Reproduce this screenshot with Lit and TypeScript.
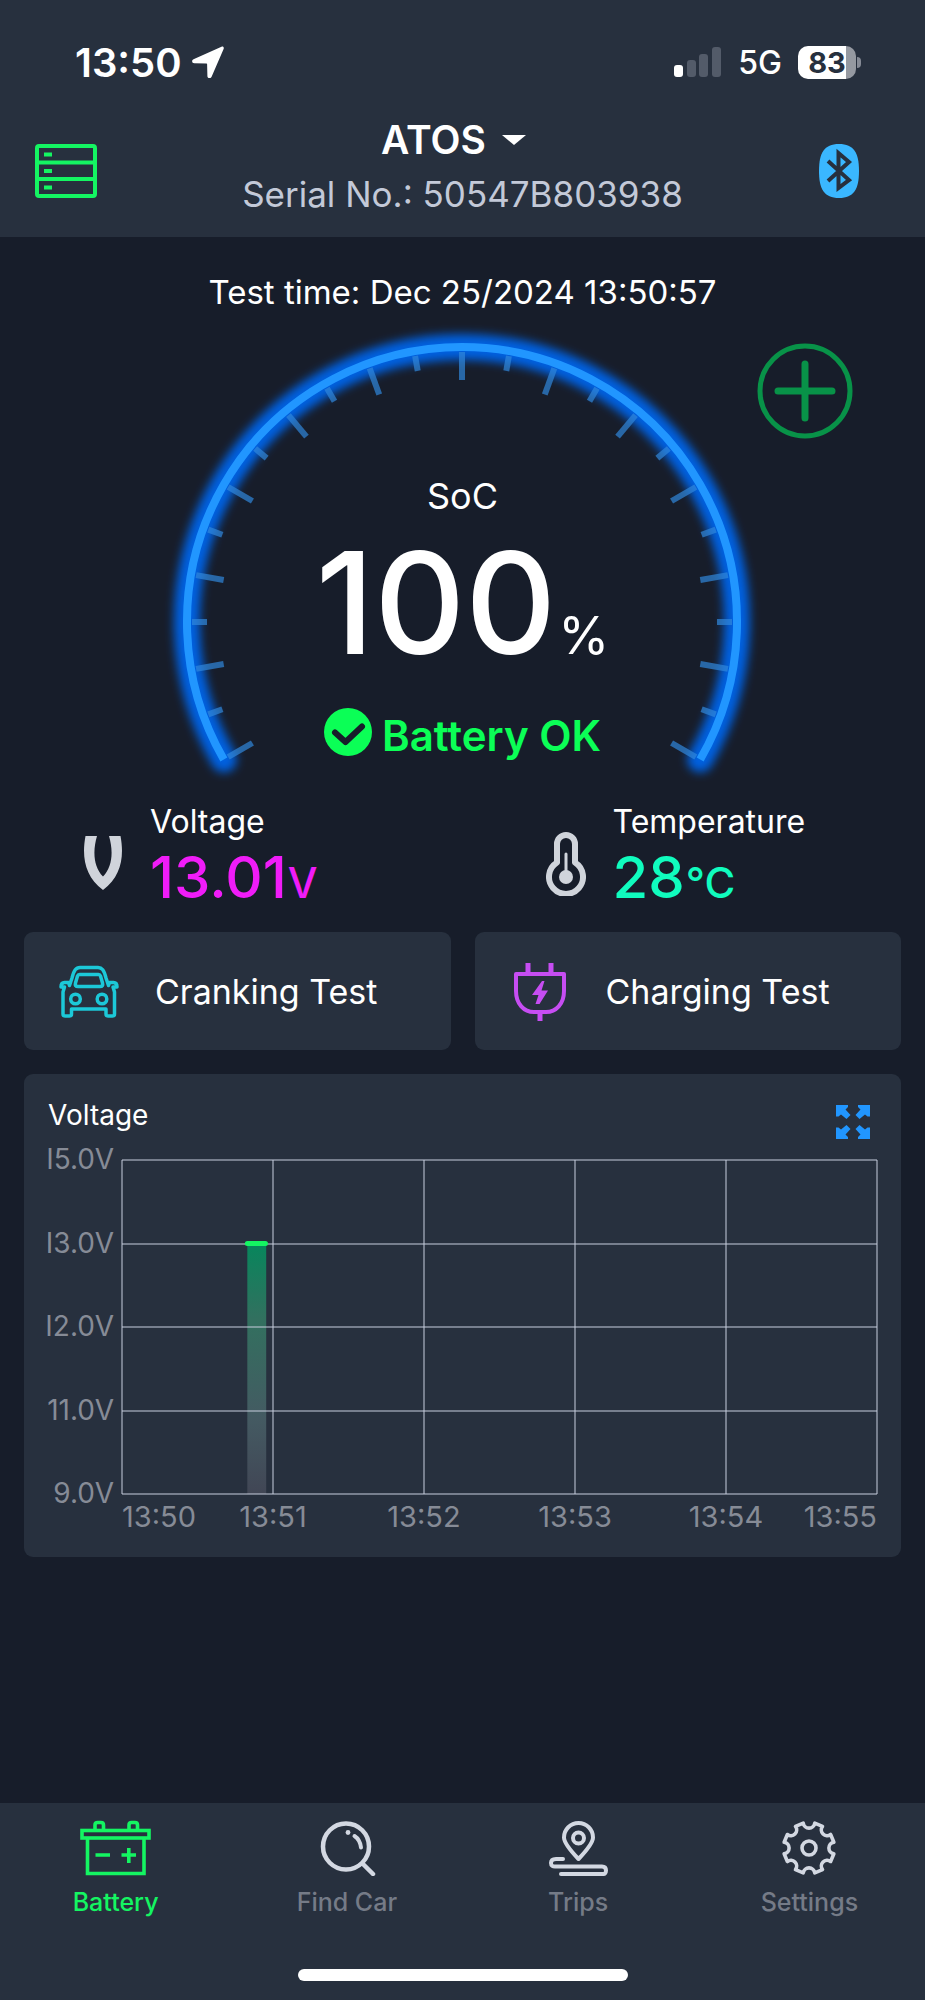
import { LitElement, html, svg, css } from "lit";
import { customElement, property, state } from "lit/decorators.js";
import { classMap } from "lit/directives/class-map.js";

const polar = (cx: number, cy: number, r: number, deg: number) => {
  const a = (deg * Math.PI) / 180;
  return [cx + r * Math.cos(a), cy + r * Math.sin(a)].map((n) => n.toFixed(2)).join(" ");
};

/** Outline of the settings gear: eight teeth separated by round notches. */
const gearPath = () => {
  let d = "";
  for (let k = 0; k < 8; k++) {
    const a = k * 45;
    d += `${k ? "L" : "M"}${polar(30, 28, 25.5, a - 13)}A5.8 5.8 0 0 0 ${polar(30, 28, 25.5, a + 13)}`;
  }
  return d + "Z";
};

const icons = {
  list: svg`<svg viewBox="0 0 62 54" width="62" height="54" fill="none" stroke="#14f562" stroke-width="4">
    <rect x="2" y="2" width="58" height="50" rx="2"/><path d="M2 18.5H60M2 35H60"/>
    <path d="M9 10.500H17M9 27H17M9 43.500H17"/></svg>`,
  bluetooth: svg`<svg viewBox="0 0 42 54" width="42" height="54">
    <path fill="#3ab7ff" d="M21 0C36 0 41 9 41 27S36 54 21 54 1 45 1 27 6 0 21 0Z"/>
    <path fill="none" stroke="#27303e" stroke-width="4" d="M10 17 31 36 20.500 44V9L31 18 10 37"/></svg>`,
  arrow: svg`<svg viewBox="0 0 32 32" width="32" height="32"><path fill="#fff" d="M29.500 .8 1.500 13.300c-2.200 1-1.600 4 .8 4l12.200.3c.4 0 .6.200.6.600l.3 11.800c0 2.500 3.200 3 4.200.8L31.600 3c.7-1.600-.5-2.900-2.100-2.200Z"/></svg>`,
  signal: svg`<svg viewBox="0 0 48 30" width="48" height="30" fill="#535b69">
    <rect x="0" y="18" width="9" height="12" rx="3" fill="#fff"/><rect x="13" y="13" width="9" height="17" rx="3"/>
    <rect x="25" y="7" width="9" height="23" rx="3"/><rect x="38" y="0" width="9" height="30" rx="3"/></svg>`,
  volt: svg`<svg viewBox="0 0 40 64" width="40" height="64"><path fill="#d0d4db" d="M2.500 4H14C9.500 19 10.500 35 20 44.500 29.500 35 30.500 19 26 4H37.500C41.500 25 38 45 20 58 2 45-1.500 25 2.500 4Z"/></svg>`,
  thermo: svg`<svg viewBox="0 0 40 64" width="40" height="64" fill="none" stroke="#d0d4db">
    <path stroke-width="6" stroke-linejoin="round" d="M11 12a9 9 0 0 1 18 0v18.500a17 17 0 1 1-18 0Z"/>
    <path stroke-width="3" stroke-linecap="round" d="M20 22V44"/><circle cx="20" cy="45" r="7" fill="#d0d4db" stroke="none"/></svg>`,
  car: svg`<svg viewBox="0 0 60 60" width="60" height="60" fill="none" stroke="#1cc8d8" stroke-width="3.500" stroke-linejoin="round">
    <path d="M10.500 24.500 13 17C15 9 17 6.500 21 6.500H39C43 6.500 45 9 47 17L49.500 24.500 50.500 21.500H54.500Q58 21.500 58 26H54L55.500 31V53Q55.500 55 53.500 55H49Q47 55 47 53V48H12.500V53Q12.500 55 10.500 55H6Q4 55 4 53V31L5.500 26H2Q2 21.500 5.500 21.500H9.500Z"/>
    <path d="M20.500 13.500H39.500Q41 13.500 41.500 15L43.500 22Q44.500 25.500 41 25.500H19Q15.500 25.500 16.500 22L18.500 15Q19 13.500 20.500 13.500Z"/>
    <circle cx="16.500" cy="38" r="4.800"/><circle cx="43" cy="38" r="4.800"/></svg>`,
  plug: svg`<svg viewBox="0 0 60 60" width="60" height="60" fill="none" stroke="#c64df2" stroke-width="4">
    <path stroke-linejoin="round" d="M6 13H54V30C54 43 46 51 36 51H24C14 51 6 43 6 30Z"/><path d="M18 2V13M41 2V13M30 51V60" stroke-width="5"/>
    <path fill="#c64df2" stroke="none" d="M32 20 22 34H28.500L25.500 43H29.500L38 29.500H31.500L34.500 20Z"/></svg>`,
  expand: svg`<svg viewBox="0 0 34 34" width="34" height="34" fill="#2196ff">
    <path d="M0 0H12V2L9.500 4.500 14.500 10 10.500 14 5 9.500 2.500 11.500H0ZM34 0H22V2L24.500 4.500 19.500 10 23.500 14 29 9.500 31.500 11.500H34ZM0 34H12V32L9.500 29.500 14.500 24 10.500 20 5 24.500 2.500 22.500H0ZM34 34H22V32L24.500 29.500 19.500 24 23.500 20 29 24.500 31.500 22.500H34Z"/></svg>`,
  battery: svg`<svg viewBox="0 0 72 56" width="72" height="56" fill="none" stroke="#14f562" stroke-width="3.600">
    <rect x="2" y="10.500" width="67" height="7.500"/><path d="M7.500 18V53.500H64V18M15 10V5Q15 2.500 17.500 2.500H21Q23.500 2.500 23.500 5V10M49 10V5Q49 2.500 51.500 2.500H55Q57.500 2.500 57.500 5V10M15.500 35H30M41.500 35H56M48.800 28V43"/></svg>`,
  search: svg`<svg viewBox="0 0 60 56" width="60" height="56" fill="none" stroke="#d3d8e2" stroke-width="4.500" stroke-linecap="round">
    <circle cx="29" cy="26.500" r="23"/><path d="M46 44 56 54"/><path d="M37.500 16Q43 19.500 44 27.500" stroke-width="4"/><circle cx="31" cy="12.500" r="2.400" fill="#d3d8e2" stroke="none"/></svg>`,
  trips: svg`<svg viewBox="0 0 60 56" width="60" height="56" fill="none" stroke="#d3d8e2" stroke-width="4" stroke-linecap="round" stroke-linejoin="round">
    <path d="M30.500 39C20 28 16 22 16 17.500a14.500 14.500 0 0 1 29 0C45 22 41 28 30.500 39Z"/><circle cx="30.500" cy="18" r="5.500"/>
    <path d="M15 39H8Q3 39 3 43T8 46.500H54Q58 46.500 58 50.500T54 54H13"/></svg>`,
  gear: svg`<svg viewBox="0 0 60 56" width="60" height="56" fill="none" stroke="#d3d8e2" stroke-width="3.600" stroke-linejoin="round">
    <path d=${gearPath()}/><circle cx="30" cy="28" r="7"/></svg>`,
};

@customElement("soc-gauge")
class SocGauge extends LitElement {
  @property({ type: Number }) value = 100;

  static styles = css`
    :host { display: grid; justify-items: center; }
    .dial, .reading { grid-area: 1 / 1; }
    .dial { display: block; width: 600px; max-width: 100%; }
    .reading { display: flex; flex-direction: column; align-items: center; padding-top: 152px; }
    .label { font-size: 36px; line-height: 44px; }
    .amount { display: flex; align-items: baseline; gap: 2px; margin-top: 15px; line-height: 140px; }
    .number { font-size: 141px; font-weight: 500; }
    .percent { font-size: 52px; line-height: 60px; font-weight: 400; }
    .status { display: flex; align-items: center; gap: 10px; margin-top: 35px; font-size: 42px; line-height: 48px; font-weight: 600; color: #0bff56; }
    .check { display: block; }
  `;

  render() {
    const arc = `M${polar(300, 300, 275, 150)}A275 275 0 1 1 ${polar(300, 300, 275, 30)}`;
    const ticks = Array.from({ length: 25 }, (_, i) => {
      const deg = 150 + i * 10;
      return svg`<path d=${`M${polar(300, 300, 270, deg)}L${polar(300, 300, i % 2 ? 255 : 242, deg)}`}/>`;
    });
    return html`
      <svg class="dial" viewBox="1 0 600 460" aria-hidden="true">
        <defs><filter id="glow" filterUnits="userSpaceOnUse" x="-20" y="-20" width="640" height="500"><feGaussianBlur stdDeviation="5"/></filter></defs>
        <path d=${arc} fill="none" stroke="#0061e0" stroke-width="26" stroke-linecap="round" filter="url(#glow)"/>
        <g stroke="#3088dc" stroke-opacity=".7" stroke-width="6">${ticks}</g>
        <path d=${arc} fill="none" stroke="#2196ff" stroke-width="8"/>
      </svg>
      <div class="reading">
        <span class="label">SoC</span>
        <div class="amount"><span class="number">${this.value}</span><span class="percent">%</span></div>
        <div class="status">
          <svg class="check" viewBox="0 0 48 56" width="48" height="56"><circle cx="24" cy="24" r="24" fill="#0bff56"/><path d="M11 24.500 21.500 34 38 18.500" fill="none" stroke="#171d2a" stroke-width="6" stroke-linecap="round" stroke-linejoin="round"/></svg>
          <span>Battery OK</span>
        </div>
      </div>`;
  }
}

@customElement("voltage-chart")
class VoltageChart extends LitElement {
  @property({ attribute: false }) levels = ["I5.0V", "I3.0V", "I2.0V", "11.0V", "9.0V"];
  @property({ attribute: false }) times = ["13:50", "13:51", "13:52", "13:53", "13:54", "13:55"];

  static styles = css`
    :host { display: block; background: #27303e; border-radius: 9px; padding: 23px 24px 24px 0; }
    .head { display: flex; justify-content: space-between; align-items: flex-start; height: 63px; padding: 0 7px 0 24px; }
    .title { margin: 0; font-size: 28px; line-height: 36px; font-weight: 400; }
    .expand { border: 0; background: none; padding: 8px 0 0; cursor: pointer; }
    .expand svg { display: block; }
    .body { display: grid; grid-template-columns: 98px 1fr; color: #868b96; font-size: 29px; line-height: 32px; }
    .levels { display: flex; flex-direction: column; justify-content: space-between; align-items: flex-end; margin: -17px 0 -15px; padding-right: 8px; font-size: 28px; }
    .plot { display: block; width: 100%; height: 334px; overflow: visible; }
    .times { grid-column: 2; display: flex; padding-top: 7px; white-space: nowrap; }
    .time { flex: 2; text-align: center; }
    .time:first-child { flex: 1; text-align: left; }
    .time:last-child { flex: 1; text-align: right; }
  `;

  render() {
    const rows = [0, 25, 50, 75, 100];
    const cols = [0, 20, 40, 60, 80, 100];
    return html`
      <div class="head">
        <h2 class="title">Voltage</h2>
        <button class="expand" aria-label="Expand chart">${icons.expand}</button>
      </div>
      <div class="body">
        <div class="levels">${this.levels.map((l) => html`<span>${l}</span>`)}</div>
        <svg class="plot" role="img" aria-label="Voltage over time">
          <defs><linearGradient id="fade" x1="0" y1="0" x2="0" y2="1">
            <stop offset="0" stop-color="#07865c"/><stop offset=".3" stop-color="#32705f"/>
            <stop offset=".7" stop-color="#445a62"/><stop offset="1" stop-color="#414655"/></linearGradient></defs>
          <rect x="16.600%" y="25%" width="2.500%" height="75%" fill="url(#fade)"/>
          <g stroke="#c8cede" stroke-opacity=".5" stroke-width="2" shape-rendering="crispEdges">
            ${rows.map((y) => svg`<line x1="0" x2="100%" y1=${y + "%"} y2=${y + "%"}/>`)}
            ${cols.map((x) => svg`<line y1="0" y2="100%" x1=${x + "%"} x2=${x + "%"}/>`)}
          </g>
          <line x1="16.600%" x2="19%" y1="25%" y2="25%" stroke="#14f562" stroke-width="5" stroke-linecap="round"/>
        </svg>
        <div class="times">${this.times.map((t) => html`<span class="time">${t}</span>`)}</div>
      </div>`;
  }
}

@customElement("app-root")
class AppRoot extends LitElement {
  @state() private tab = "Battery";

  static styles = css`
    :host { display: flex; flex-direction: column; min-height: 100vh; background: #171d2a; color: #fff; font-family: Inter, "Liberation Sans", sans-serif; }
    button { font: inherit; color: inherit; border: 0; background: none; padding: 0; cursor: pointer; }
    svg { display: block; }
    .top { background: #27303e; padding: 38px 0 21px; }
    .status { display: flex; justify-content: space-between; align-items: center; height: 48px; padding: 0 64px 0 75px; }
    .clock { display: flex; align-items: center; gap: 10px; font-size: 40px; font-weight: 600; }
    .radio { display: flex; align-items: center; gap: 16px; font-size: 32px; font-weight: 500; }
    .cell { display: flex; align-items: center; gap: 1px; }
    .charge { display: flex; align-items: center; justify-content: center; width: 58px; height: 33px; border-radius: 10px; background: linear-gradient(90deg, #fff 83%, #9599a1 83%); color: #27303e; font-size: 29px; line-height: 33px; font-weight: 700; }
    .tip { width: 4px; height: 11px; border-radius: 0 6px 6px 0; background: #868b96; }
    .bar { display: grid; grid-template-columns: 1fr auto 1fr; align-items: center; margin-top: 30px; padding: 0 65px 0 35px; }
    .bar > button { padding-top: 9px; }
    .bar > :last-child { justify-self: end; }
    .bar > :first-child { justify-self: start; }
    .title { display: flex; flex-direction: column; align-items: center; gap: 8px; margin-left: 30px; }
    .device { display: flex; align-items: center; gap: 16px; padding-right: 18px; font-size: 39px; line-height: 48px; font-weight: 600; }
    .caret { border: 12px solid transparent; border-top: 10px solid #fff; border-bottom: 0; }
    .serial { font-size: 35px; line-height: 44px; color: #c3c9d8; }
    .body { display: flex; flex-direction: column; padding: 35px 24px 24px; }
    .time { text-align: center; font-size: 33px; line-height: 40px; }
    .hero { display: grid; margin-top: 10px; }
    .hero > * { grid-area: 1 / 1; }
    .add { justify-self: end; align-self: start; margin: 21px 48px 0 0; }
    .metrics { display: grid; grid-template-columns: 1fr 1fr; margin: 20px -24px 0; }
    .metric { display: flex; align-items: flex-end; gap: 27px; padding-left: 83px; }
    .metric svg { margin-bottom: 11px; }
    .name { font-size: 32px; line-height: 40px; }
    .value { display: flex; align-items: baseline; gap: 1px; margin-top: 5px; line-height: 60px; font-size: 58px; font-weight: 500; }
    .unit { font-size: 42px; line-height: 44px; }
    .volts { color: #f01cf8; }
    .degrees { color: #10fcbe; }
    .tests { display: grid; grid-template-columns: 1fr 1fr; gap: 24px; margin: 25px 0 24px; }
    .test { display: flex; align-items: center; gap: 36px; height: 118px; padding: 0 35px; background: #27303e; border-radius: 9px; font-size: 34px; }
    .nav { margin-top: auto; background: #27303e; padding: 17px 0 19px; }
    .tabs { display: grid; grid-template-columns: repeat(4, 1fr); }
    .tab { display: flex; flex-direction: column; align-items: center; gap: 11px; font-size: 25px; line-height: 30px; font-weight: 500; color: #757b87; }
    .active { color: #14f562; }
    .home { width: 330px; height: 12px; margin: 52px auto 0; border-radius: 6px; background: #fff; }
  `;

  render() {
    const tabs = [
      { name: "Battery", icon: icons.battery },
      { name: "Find Car", icon: icons.search },
      { name: "Trips", icon: icons.trips },
      { name: "Settings", icon: icons.gear },
    ];
    return html`
      <header class="top">
        <div class="status">
          <div class="clock"><span>13:50</span>${icons.arrow}</div>
          <div class="radio">${icons.signal}<span>5G</span>
            <div class="cell"><span class="charge">83</span><span class="tip"></span></div>
          </div>
        </div>
        <div class="bar">
          <button aria-label="Devices">${icons.list}</button>
          <div class="title">
            <button class="device">ATOS<span class="caret"></span></button>
            <span class="serial">Serial No.: 50547B803938</span>
          </div>
          <button aria-label="Bluetooth">${icons.bluetooth}</button>
        </div>
      </header>
      <main class="body">
        <div class="time">Test time: Dec 25/2024 13:50:57</div>
        <div class="hero">
          <soc-gauge .value=${100}></soc-gauge>
          <button class="add" aria-label="Add">
            <svg viewBox="0 0 96 96" width="96" height="96" fill="none" stroke="#089248"><circle cx="48" cy="48" r="45" stroke-width="5"/><path d="M48 21V75M21 48H75" stroke-width="7" stroke-linecap="round"/></svg>
          </button>
        </div>
        <div class="metrics">
          <div class="metric">${icons.volt}<div><div class="name">Voltage</div><div class="value volts">13.01<span class="unit">V</span></div></div></div>
          <div class="metric">${icons.thermo}<div><div class="name">Temperature</div><div class="value degrees">28<span class="unit">°C</span></div></div></div>
        </div>
        <div class="tests">
          <button class="test">${icons.car}<span>Cranking Test</span></button>
          <button class="test">${icons.plug}<span>Charging Test</span></button>
        </div>
        <voltage-chart></voltage-chart>
      </main>
      <nav class="nav">
        <div class="tabs">
          ${tabs.map((t) => html`<button class=${classMap({ tab: true, active: t.name === this.tab })} @click=${() => (this.tab = t.name)}>${t.icon}<span>${t.name}</span></button>`)}
        </div>
        <div class="home"></div>
      </nav>`;
  }
}
